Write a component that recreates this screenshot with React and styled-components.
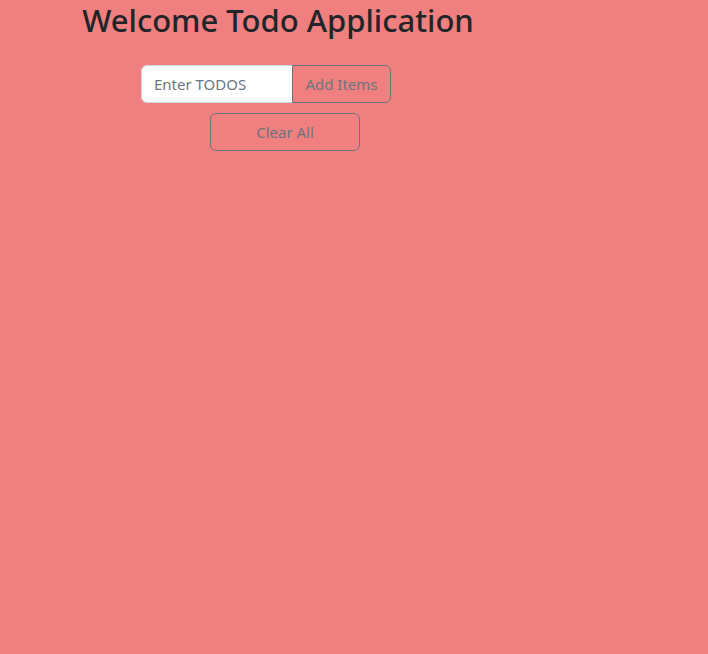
import React from "react";
import styled, { createGlobalStyle } from "styled-components";

const Global = createGlobalStyle`
  html, body { margin: 0; padding: 0; }
  body {
    background: #f08080;
    font-family: "Segoe UI", "Noto Sans", "Open Sans", sans-serif;
    color: #212529;
    min-height: 100vh;
  }
`;

const Page = styled.div`
  min-height: 654px;
  background: #f08080;
  display: flex;
  flex-direction: column;
`;

const Title = styled.h1`
  width: 556px;
  margin: 0 0 8px;
  text-align: center;
  font-size: 31px;
  font-weight: 500;
  line-height: 40px;
  color: #212529;
`;

const InputGroup = styled.div`
  display: flex;
  margin: 17px 0 0 141px;
  width: 250px;
  height: 38px;
`;

const Input = styled.input`
  box-sizing: border-box;
  width: 152px;
  height: 38px;
  padding: 6px 12px;
  font: inherit;
  font-size: 15px;
  color: #212529;
  background: #fff;
  border: 1px solid #ced4da;
  border-radius: 6px 0 0 6px;
  outline: none;
  &::placeholder { color: #6c757d; }
`;

const OutlineButton = styled.button`
  box-sizing: border-box;
  height: 38px;
  width: ${(p) => p.$w}px;
  padding: 6px 4px;
  white-space: nowrap;
  font: inherit;
  font-size: 15px;
  color: #6c757d;
  background: transparent;
  border: 1px solid #6c757d;
  border-radius: ${(p) => (p.$joined ? "0 6px 6px 0" : "6px")};
  margin-left: ${(p) => (p.$joined ? "-1px" : "0")};
  cursor: pointer;
`;

const ClearRow = styled.div`
  margin: 10px 0 0 210px;
`;

export default function App() {
  return (
    <Page>
      <Global />
      <Title>Welcome Todo Application</Title>
      <InputGroup>
        <Input placeholder="Enter TODOS" />
        <OutlineButton $joined $w={99}>Add Items</OutlineButton>
      </InputGroup>
      <ClearRow>
        <OutlineButton $w={150}>Clear All</OutlineButton>
      </ClearRow>
    </Page>
  );
}
